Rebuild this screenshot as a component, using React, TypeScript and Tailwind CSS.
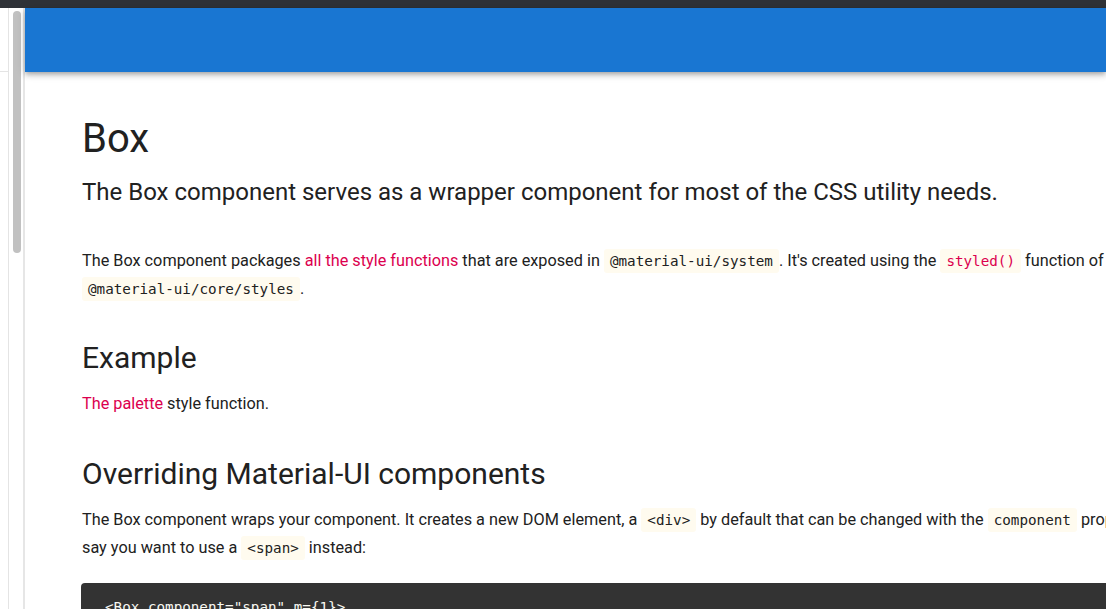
import React from "react"

const body = "font-['Roboto','Liberation_Sans',sans-serif]"
const mono = "font-['DejaVu_Sans_Mono','Liberation_Mono',monospace]"

function Code({ children, pink }: { children: React.ReactNode; pink?: boolean }) {
  return (
    <code
      className={`${mono} text-[14.25px] bg-[#fffbef] rounded-[3px] px-[6px] py-[4px] ${pink ? "text-[#dc004e]" : "text-[#212121]"}`}
    >
      {children}
    </code>
  )
}

function Link({ children }: { children: React.ReactNode }) {
  return <span className="text-[#dc004e]">{children}</span>
}

export default function App() {
  return (
    <div className={`w-[1106px] h-[609px] overflow-hidden bg-white flex flex-col ${body}`}>
      {/* window top strip */}
      <div className="h-2 shrink-0 bg-[#2f3237]" />

      <div className="flex flex-1 min-h-0">
        {/* left gutter with scrollbar */}
        <div className="w-[25px] shrink-0 flex">
          <div className="w-[9px] border-r border-[#e4e4e4] flex flex-col">
            <div className="h-[64px] border-b border-[#e4e4e4]" />
          </div>
          <div className="w-[14px] pt-[3px] flex justify-center">
            <div className="w-[8px] h-[242px] ml-[1px] rounded-full bg-[#c1c1c1]" />
          </div>
          <div className="w-[2px] bg-[#e6e6e6]" />
        </div>

        {/* main page */}
        <div className="flex-1 min-w-0 flex flex-col">
          <div className="h-[64px] shrink-0 bg-[#1976d2] relative z-10 shadow-[0_2px_4px_-1px_rgba(0,0,0,0.2),0_4px_5px_0_rgba(0,0,0,0.14),0_1px_10px_0_rgba(0,0,0,0.12)]" />

          <main className="pl-[57px] text-[#212121] whitespace-nowrap">
            <h1 className="text-[40px] leading-[48px] font-normal mt-[43px]">Box</h1>
            <p className="text-[24px] leading-[32px] mt-[13px]">
              The Box component serves as a wrapper component for most of the CSS utility needs.
            </p>

            <p className="text-[16.25px] leading-[27px] mt-[39px]">
              The Box component packages <Link>all the style functions</Link> that are exposed in{" "}
              <Code>@material-ui/system</Code>. It's created using the <Code pink>styled()</Code> function of the
              <br />
              <Code>@material-ui/core/styles</Code>.
            </p>

            <h2 className="text-[30px] leading-[36px] font-normal mt-[37px]">Example</h2>
            <p className="text-[16.25px] leading-[27px] mt-[14px]">
              <Link>The palette</Link> style function.
            </p>

            <h2 className="text-[30px] leading-[36px] font-normal mt-[39px]">Overriding Material-UI components</h2>
            <p className="text-[16.25px] leading-[27px] mt-[14px]">
              The Box component wraps your component. It creates a new DOM element, a <Code>&lt;div&gt;</Code> by
              default that can be changed with the <Code>component</Code> property. Let's
              <br />
              say you want to use a <Code>&lt;span&gt;</Code> instead:
            </p>

            <pre
              className={`${mono} mt-[21px] -ml-[1px] w-[1100px] bg-[#333333] rounded-[4px] text-[14.25px] leading-[21px] text-[#f8f8f2] pt-[14px] pb-4 px-[24px]`}
            >
              {`<Box component="span" m={1}>
  <Button />
</Box>`}
            </pre>
          </main>
        </div>
      </div>
    </div>
  )
}
